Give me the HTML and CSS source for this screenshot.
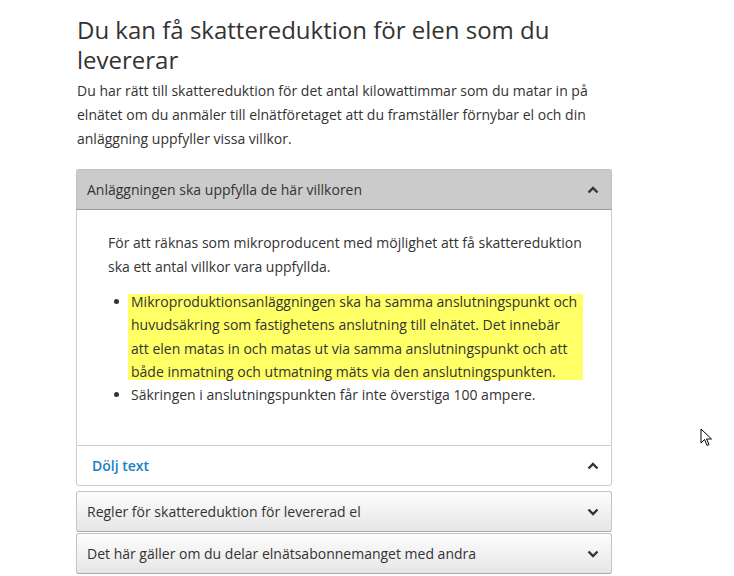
FILE: index.html
```html
<!DOCTYPE html>
<html lang="sv">
<head>
    <meta charset="UTF-8">
    <meta name="viewport" content="width=device-width, initial-scale=1.0">
    <title>Skattereduktion för mikroproduktion</title>
    <link rel="stylesheet" href="styles.css">
</head>
<body>
    <div class="page">
        <h1>Du kan få skattereduktion för elen som du levererar</h1>
        <p class="lead">Du har rätt till skattereduktion för det antal kilowattimmar som du matar in på elnätet om du anmäler till elnätföretaget att du framställer förnybar el och din anläggning uppfyller vissa villkor.</p>

        <div class="accordion open">
            <div class="acc-head">
                <span>Anläggningen ska uppfylla de här villkoren</span>
                <svg class="chevron" width="12" height="8" viewBox="0 0 12 8"><path d="M1.5 6.5 L6 2 L10.5 6.5" fill="none" stroke="#333" stroke-width="2.4"/></svg>
            </div>
            <div class="acc-body">
                <p>För att räknas som mikroproducent med möjlighet att få skattereduktion ska ett antal villkor vara uppfyllda.</p>
                <ul>
                    <li><div class="mark">Mikroproduktionsanläggningen ska ha samma anslutningspunkt och huvudsäkring som fastighetens anslutning till elnätet. Det innebär att elen matas in och matas ut via samma anslutningspunkt och att både inmatning och utmatning mäts via den anslutningspunkten.</div></li>
                    <li>Säkringen i anslutningspunkten får inte överstiga 100 ampere.</li>
                </ul>
            </div>
            <div class="acc-foot">
                <span>Dölj text</span>
                <svg class="chevron" width="12" height="8" viewBox="0 0 12 8"><path d="M1.5 6.5 L6 2 L10.5 6.5" fill="none" stroke="#333" stroke-width="2.4"/></svg>
            </div>
        </div>

        <div class="accordion">
            <div class="acc-head">
                <span>Regler för skattereduktion för levererad el</span>
                <svg class="chevron" width="12" height="8" viewBox="0 0 12 8"><path d="M1.5 1.5 L6 6 L10.5 1.5" fill="none" stroke="#333" stroke-width="2.4"/></svg>
            </div>
        </div>

        <div class="accordion tight">
            <div class="acc-head">
                <span>Det här gäller om du delar elnätsabonnemanget med andra</span>
                <svg class="chevron" width="12" height="8" viewBox="0 0 12 8"><path d="M1.5 1.5 L6 6 L10.5 1.5" fill="none" stroke="#333" stroke-width="2.4"/></svg>
            </div>
        </div>
    </div>

    <svg class="cursor" width="14" height="20" viewBox="0 0 14 20"><path d="M1 1 L1 15 L4.5 11.5 L7 17.5 L9 16.6 L6.6 11 L11.5 11 Z" fill="#fff" stroke="#000" stroke-width="1"/></svg>
</body>
</html>
```

FILE: styles.css
```css
body {
    margin: 0;
    background: #fff;
    font-family: 'Open Sans', sans-serif;
    color: #333;
}

.page {
    width: 536px;
    margin-left: 76px;
    padding-top: 15px;
}

h1 {
    margin: 0 0 0 1px;
    font-size: 24px;
    font-weight: 400;
    line-height: 30px;
    color: #333;
}

.lead {
    margin: 4px 0 18px 1px;
    font-size: 14px;
    line-height: 24px;
}

.accordion {
    margin-bottom: 5px;
}

.accordion.tight {
    margin-top: -4px;
}

.acc-head {
    height: 39px;
    display: flex;
    align-items: center;
    justify-content: space-between;
    padding: 0 12px 0 10px;
    font-size: 14px;
    border: 1px solid #c4c4c4;
    border-bottom-color: #a9a9a9;
    border-radius: 3px;
    background: linear-gradient(#fdfdfd, #e6e6e6);
}

.open .acc-head {
    background: #cbcbcb;
    border-color: #c2c2c2;
    border-bottom-color: #999;
    border-radius: 3px 3px 0 0;
}

.acc-body {
    border-left: 1px solid #ccc;
    border-right: 1px solid #ccc;
    padding: 21px 28px 38px 31px;
    font-size: 14px;
    line-height: 24px;
}

.acc-body p {
    margin: 0 0 11px 0;
}

.acc-body ul {
    margin: 0;
    padding-left: 23px;
}

.mark {
    line-height: 23.33px;
    margin-left: -3px;
    padding: 0 3px;
    background: linear-gradient(#ffff66, #ffff66) no-repeat 0 4px;
    background-size: 100% calc(100% - 7px);
}

.acc-foot {
    height: 39px;
    display: flex;
    align-items: center;
    justify-content: space-between;
    padding: 0 12px 0 15px;
    border: 1px solid #ccc;
    border-radius: 0 0 3px 3px;
    font-size: 14px;
    font-weight: 600;
    color: #1a80c4;
}

.cursor {
    position: absolute;
    left: 700px;
    top: 428px;
}
```
